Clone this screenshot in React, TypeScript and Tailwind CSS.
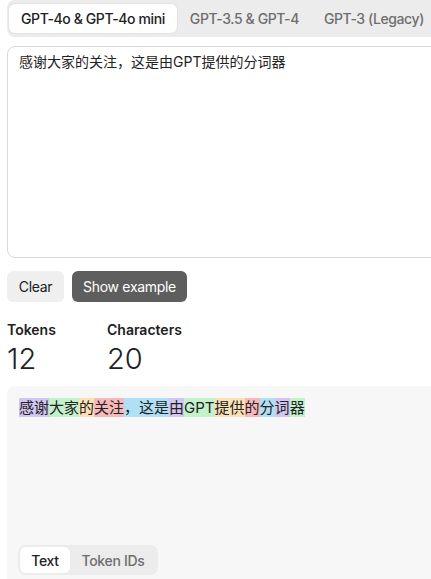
import React, { useState } from "react";

const tokens: string[] = ["感谢", "大家", "的", "关注", "，这是", "由", "GPT", "提供", "的", "分", "词", "器"];

const tokenColors = [
  "bg-[#d2c6f2]",
  "bg-[#c3f1ca]",
  "bg-[#fbe1b6]",
  "bg-[#f8b8ba]",
  "bg-[#b0e0f5]",
];

const models = ["GPT-4o & GPT-4o mini", "GPT-3.5 & GPT-4", "GPT-3 (Legacy)"];

const App: React.FC = () => {
  const [model, setModel] = useState(0);
  const [view, setView] = useState<"text" | "ids">("text");
  const text = tokens.join("");

  return (
    <div
      className="w-[431px] h-[579px] overflow-hidden bg-white text-[#202123]"
      style={{ fontFamily: 'Inter, "Noto Sans CJK SC", sans-serif' }}
    >
      <div className="w-[640px] pl-[7px]">
        {/* Model tabs */}
        <div className="flex gap-[1px] bg-[#ececec] rounded-lg p-[4px] pl-[2px] h-[37px]">
          {models.map((m, i) => (
            <button
              key={m}
              onClick={() => setModel(i)}
              className={
                i === model
                  ? "h-[29px] px-[12px] rounded-md bg-white text-[14px] tracking-[-0.4px] font-medium text-[#202123] shadow-[0_0_0_1px_#e3e3e3]"
                  : "h-[29px] px-[12px] rounded-md text-[14px] tracking-[-0.4px] font-medium text-[#6e6e6e]"
              }
            >
              {m}
            </button>
          ))}
        </div>

        {/* Input */}
        <div className="mt-[9px] h-[212px] rounded-lg border border-[#d9d9d9] px-[11px] py-[5px] text-[14px] leading-[20px] text-[#222]">
          {text}
        </div>

        {/* Buttons */}
        <div className="flex gap-[8px] mt-[13px] tracking-[-0.3px]">
          <button className="h-[31px] w-[57px] rounded-md bg-[#efefef] text-[14px] text-[#202123]">Clear</button>
          <button className="h-[31px] w-[115px] rounded-md bg-[#5e5e5e] text-[14px] text-white">Show example</button>
        </div>

        {/* Stats */}
        <div className="flex mt-[18px]">
          <div className="w-[100px]">
            <div className="text-[14px] font-semibold leading-[20px]">Tokens</div>
            <div className="text-[29px] font-light leading-[38px]">12</div>
          </div>
          <div>
            <div className="text-[14px] font-semibold leading-[20px]">Characters</div>
            <div className="text-[29px] font-light leading-[38px]">20</div>
          </div>
        </div>

        {/* Output */}
        <div className="mt-[8px] h-[220px] rounded-lg bg-[#f7f7f7] px-[12px] pt-[13px] flex flex-col">
          <div className="text-[15px] leading-[18px] text-[#222]">
            {view === "text"
              ? tokens.map((t, i) => (
                  <span key={i} className={tokenColors[i % tokenColors.length]}>
                    {t}
                  </span>
                ))
              : "[13910, 35649, 15432, 1616, 5500, 11, 25624, 8206, 38, 4625, 14843, 7140]"}
          </div>
          <div className="mt-[128px] flex w-[140px] -ml-[1px] rounded-lg bg-[#ececec] p-[2px] tracking-[-0.3px]">
            <button
              onClick={() => setView("text")}
              className={
                view === "text"
                  ? "w-[50px] h-[26px] rounded-md bg-white text-[14px] font-medium text-[#202123]"
                  : "w-[50px] h-[26px] rounded-md text-[14px] font-medium text-[#6e6e6e]"
              }
            >
              Text
            </button>
            <button
              onClick={() => setView("ids")}
              className={
                view === "ids"
                  ? "flex-1 h-[26px] rounded-md bg-white text-[14px] font-medium text-[#202123]"
                  : "flex-1 h-[26px] rounded-md text-[14px] font-medium text-[#6e6e6e]"
              }
            >
              Token IDs
            </button>
          </div>
        </div>
      </div>
    </div>
  );
};

export default App;
